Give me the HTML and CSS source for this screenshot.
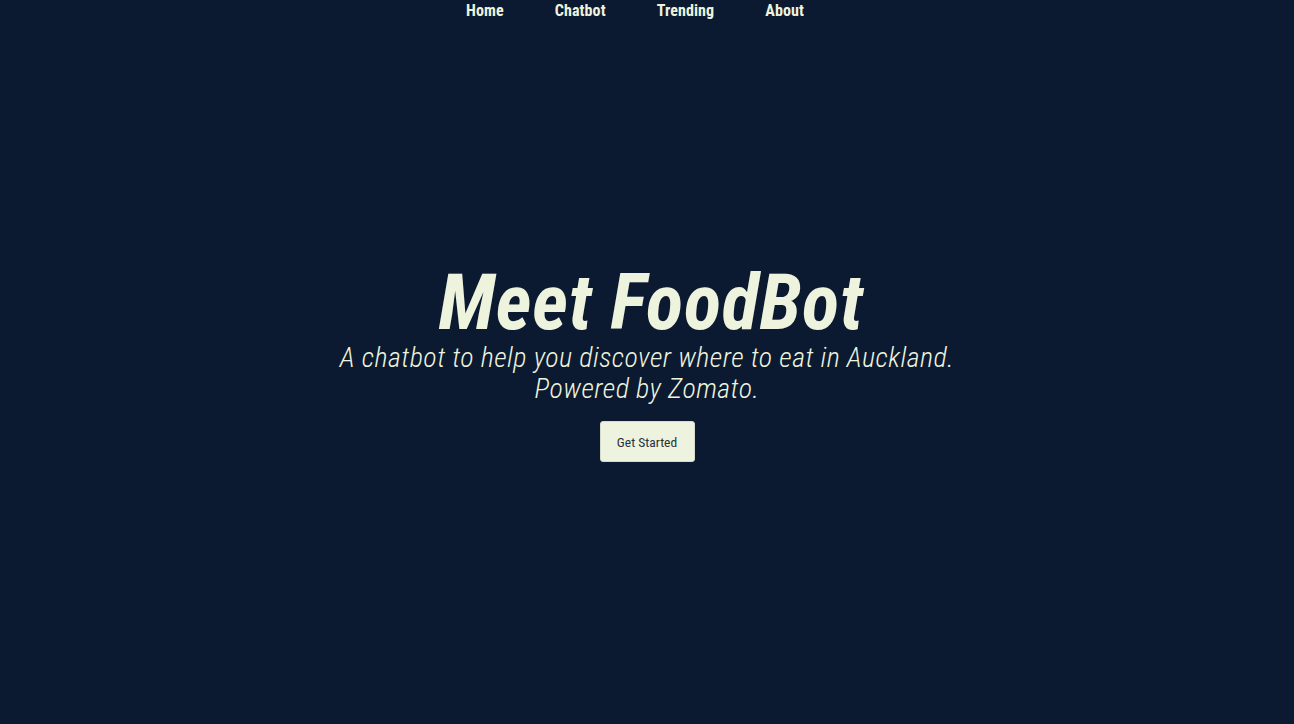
FILE: index.html
```html
<!DOCTYPE html>
<html lang="en">
<head>
<meta charset="utf-8">
<title>FoodBot</title>
<link rel="stylesheet" href="styles.css">
</head>
<body>
<nav class="topnav">
  <a class="nav-link" href="#">Home</a>
  <a class="nav-link" href="#">Chatbot</a>
  <a class="nav-link" href="#">Trending</a>
  <a class="nav-link" href="#">About</a>
</nav>
<main class="hero">
  <h1 class="hero-title">Meet FoodBot</h1>
  <p class="hero-sub">A chatbot to help you discover where to eat in Auckland.<br>Powered by Zomato.</p>
  <button class="hero-btn" type="button">Get Started</button>
</main>
</body>
</html>
```
FILE: styles.css
```css
html, body {
  margin: 0;
  padding: 0;
  height: 100%;
}
body {
  background: #0b1931;
  color: #eef3de;
  font-family: Roboto, "Open Sans", sans-serif;
  position: relative;
}
.topnav {
  position: absolute;
  top: 0;
  left: 0;
  right: 0;
  display: flex;
  justify-content: center;
  gap: 51px;
  padding-top: 1px;
  padding-right: 24px;
}
.nav-link {
  color: #eef3de;
  text-decoration: none;
  font-weight: bold;
  font-size: 16px;
  font-stretch: 75%;
  letter-spacing: 0.1px;
  line-height: 20px;
}
.hero {
  height: 100%;
  display: flex;
  flex-direction: column;
  align-items: center;
  justify-content: center;
  text-align: center;
  padding-top: 4px;
  box-sizing: border-box;
}
.hero-title {
  margin: 0;
  padding-left: 8px;
  font-size: 77px;
  font-style: italic;
  font-weight: bold;
  font-stretch: 75%;
  letter-spacing: 0.7px;
  line-height: 74px;
}
.hero-sub {
  margin: 2px 0 0;
  font-size: 28px;
  font-style: italic;
  font-weight: 300;
  font-stretch: 75%;
  letter-spacing: 0.45px;
  line-height: 31px;
}
.hero-btn {
  margin-top: 17px;
  width: 95px;
  height: 41px;
  background: #edf3df;
  color: #2c3038;
  border: 1px solid #d6dccb;
  border-radius: 3px;
  font-family: inherit;
  font-size: 13.5px;
  font-stretch: 75%;
  padding: 0;
}
```
